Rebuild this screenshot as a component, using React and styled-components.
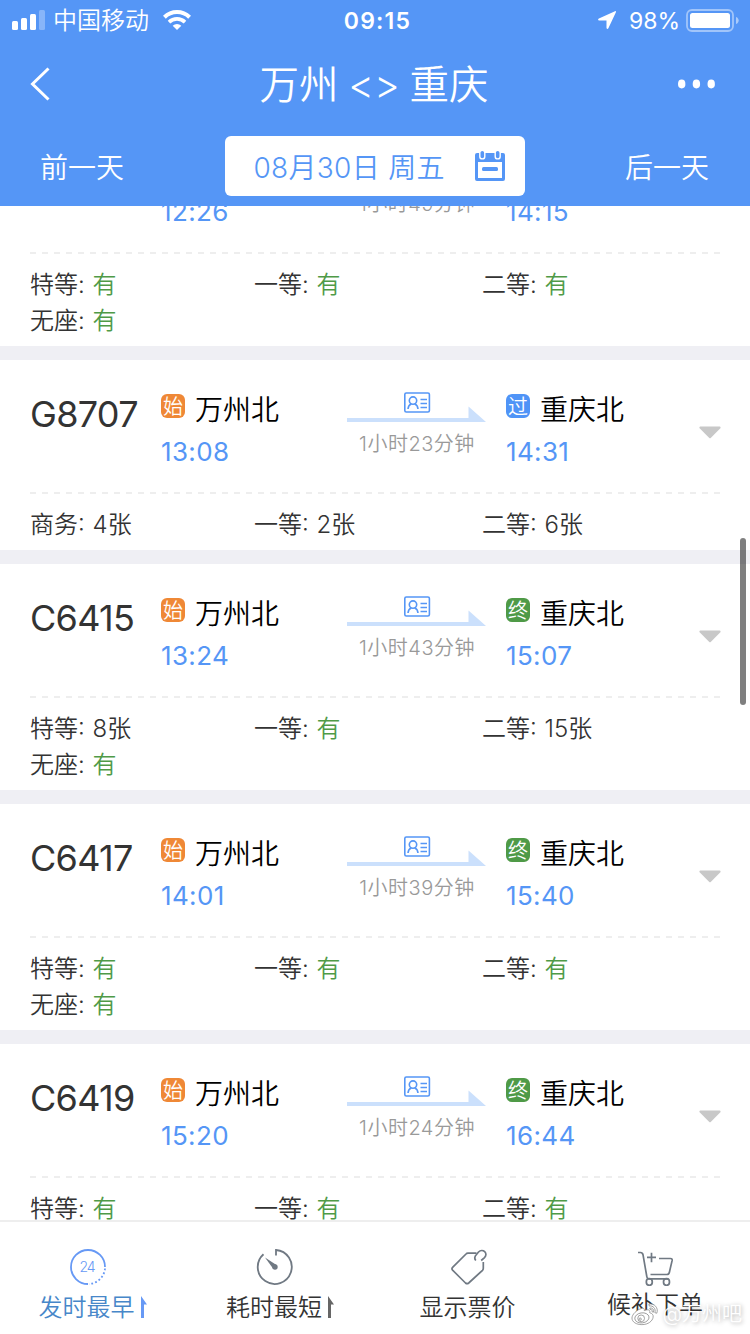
import React from "react";
import styled, { createGlobalStyle } from "styled-components";

const GlobalStyle = createGlobalStyle`
  * {
    box-sizing: border-box;
  }

  body {
    margin: 0;
    background: #fff;
    font-family: Inter, "Noto Sans CJK SC", sans-serif;
    font-weight: 350;
  }
`;

const Screen = styled.div`
  position: relative;
  display: flex;
  flex-direction: column;
  width: 750px;
  height: 1334px;
  overflow: hidden;
`;

const Header = styled.header`
  flex: none;
  height: 206px;
  color: #fff;
  background: #5596f6;
`;

const StatusBar = styled.div`
  display: grid;
  grid-template-columns: 1fr auto 1fr;
  align-items: center;
  height: 40px;
  padding: 0 11px 0 12px;
`;

const StatusLeft = styled.div`
  display: flex;
  align-items: center;
`;

const Carrier = styled.span`
  margin: 0 14px 0 8px;
  padding-top: 2px;
  font-size: 24px;
  line-height: 38px;
`;

const Clock = styled.span`
  padding: 1px 0 0 4px;
  font-size: 23px;
  font-weight: 600;
  letter-spacing: 1.2px;
`;

const StatusRight = styled.div`
  display: flex;
  align-items: center;
  justify-content: flex-end;
`;

const Percent = styled.span`
  margin: 2px 6px 0 13px;
  font-size: 23px;
  font-weight: 400;
`;

const TitleBar = styled.div`
  display: grid;
  grid-template-columns: 1fr auto 1fr;
  align-items: center;
  height: 88px;
  padding: 0 34px 0 29px;
`;

const BackButton = styled.span`
  display: flex;
`;

const MoreButton = styled.span`
  display: flex;
  justify-content: flex-end;
`;

const Title = styled.h1`
  margin: 0;
  padding: 2px 0 0 3px;
  font-size: 39.5px;
  font-weight: 350;
  line-height: 86px;
  word-spacing: -1.5px;
`;

const DateBar = styled.div`
  display: flex;
  align-items: center;
  justify-content: space-between;
  height: 76px;
  padding: 0 41px 0 40px;
`;

const DayLink = styled.span`
  padding-top: 3px;
  font-size: 28px;
  line-height: 60px;
`;

const DateBox = styled.div`
  display: flex;
  align-items: center;
  justify-content: space-between;
  width: 300px;
  height: 60px;
  padding: 0 19px 0 29px;
  border-radius: 6px;
  color: #5596f6;
  background: #fff;
  font-size: 28px;
  letter-spacing: 0.3px;
`;

const TrainList = styled.main`
  flex: 1;
  min-height: 0;
  overflow: hidden;
  background: #efeff4;
`;

const Scrolled = styled.div`
  display: flex;
  flex-direction: column;
  gap: 14px;
  margin-top: -86px;
`;

const Card = styled.section`
  background: #fff;
`;

const Trip = styled.div`
  display: grid;
  grid-template-columns: 131px 186px 140px 19px 193px 1fr;
  height: 132px;
  padding: 28px 29px 0 30px;
`;

const TrainCode = styled.span`
  font-size: 36px;
  font-weight: 400;
  line-height: 52px;
  letter-spacing: -0.7px;
  color: #333;
`;

const StationRow = styled.div`
  display: flex;
  align-items: center;
  height: 40px;
  font-size: 28px;
  color: #000;
`;

const StationName = styled.span`
  padding-top: 3px;
  line-height: 40px;
`;

const Badge = styled.span`
  width: 24px;
  height: 24px;
  margin: -4px 10px 0 0;
  border-radius: 6px;
  background: ${({ $color }) => $color};
  color: #fff;
  font-size: 20px;
  line-height: 27px;
  text-align: center;
`;

const Time = styled.div`
  height: 48px;
  font-size: 26px;
  font-weight: 400;
  line-height: 48px;
  letter-spacing: 0.35px;
  color: #5596f6;
`;

const Route = styled.div`
  padding-top: 4px;
`;

const RouteLine = styled.div`
  height: 31px;
`;

const Duration = styled.div`
  margin-top: 6px;
  font-size: 20px;
  line-height: 30px;
  letter-spacing: 0.5px;
  color: #999;
  text-align: center;
`;

const CaretCell = styled.div`
  display: flex;
  justify-content: flex-end;
  padding-top: 38px;
`;

const Dashes = styled.div`
  height: 2px;
  margin: 0 30px;
  background: repeating-linear-gradient(90deg, #eee 0 6px, #fff 6px 12px);
`;

const Seats = styled.div`
  display: grid;
  grid-template-columns: 224px 228px 1fr;
  padding: 13px 30px 7px;
  font-size: 24px;
  line-height: 36px;
  color: #333;
`;

const Seat = styled.span`
  height: 36px;
  word-spacing: 1px;
`;

const Available = styled.span`
  color: #4f9a47;
`;

const ScrollThumb = styled.div`
  position: absolute;
  top: 538px;
  right: 4px;
  width: 6px;
  height: 167px;
  border-radius: 3px;
  background: rgba(0, 0, 0, 0.5);
`;

const TabBar = styled.footer`
  display: grid;
  grid-template-columns: 187px 188px 187px 188px;
  flex: none;
  height: 114px;
  border-top: 2px solid #eee;
  background: #fff;
`;

const Tab = styled.div`
  display: flex;
  flex-direction: column;
  align-items: center;
  padding-top: 26px;
  color: ${({ $active }) => ($active ? "#4787c9" : "#333")};
`;

const TabIcon = styled.span`
  display: flex;
  height: 38px;
  padding-right: ${({ $flagged }) => ($flagged ? "12px" : "0")};
`;

const TabLabel = styled.div`
  display: flex;
  align-items: center;
  gap: 6px;
  margin: ${({ $raised }) => ($raised ? "-1px" : "2px")} 2px 0 0;
  font-size: 24px;
  line-height: 40px;

  svg {
    margin-bottom: 3px;
  }
`;

const Watermark = styled.div`
  position: absolute;
  right: 8px;
  bottom: 4px;
  display: flex;
  align-items: center;
  gap: 4px;
  color: #fff;
  font-size: 20px;
  line-height: 32px;
  text-shadow: 1px 1px 4px rgba(0, 0, 0, 0.35);
`;

const SignalIcon = () => (
  <svg width="33" height="20" viewBox="0 0 33 20" fill="#fff">
    <rect x="0" y="11" width="6" height="9" rx="1.5" />
    <rect x="9" y="8" width="6" height="12" rx="1.5" />
    <rect x="18" y="4" width="6" height="16" rx="1.5" />
    <rect x="27" y="0" width="6" height="20" rx="1.5" opacity="0.3" />
  </svg>
);

const WifiIcon = () => (
  <svg width="28" height="20" viewBox="0 0 28 20" fill="none" stroke="#fff" strokeWidth="4">
    <path d="M1.4 7.2a18 18 0 0 1 25.2 0" />
    <path d="M6 12.1a11.5 11.5 0 0 1 16 0" strokeWidth="3.6" />
    <path d="M14 20l-4.3-4.3a6.2 6.2 0 0 1 8.600 0z" fill="#fff" stroke="none" />
  </svg>
);

const LocationIcon = () => (
  <svg width="18" height="18" viewBox="0 0 18 18" fill="#fff">
    <path d="M17 .2.9 7.600c-1.200.6-1 1.900.3 1.900h7.300v7.300c0 1.400 1.400 1.600 2 .3L17.900 1.200c.3-.8-.1-1.300-.9-1z" />
  </svg>
);

const BatteryIcon = () => (
  <svg width="53" height="23" viewBox="0 0 53 23">
    <rect x="1" y="1" width="46" height="21" rx="5" fill="none" stroke="#fff" strokeWidth="1.8" opacity="0.45" />
    <rect x="4" y="4" width="40" height="15" rx="2.5" fill="#fff" />
    <path d="M50 8c3.6 1.2 3.6 6 0 7z" fill="#fff" opacity="0.5" />
  </svg>
);

const BackIcon = () => (
  <svg width="22" height="36" viewBox="0 0 22 36" fill="none" stroke="#fff" strokeWidth="3">
    <path d="M19.5 2.5 3.5 18l16 15.5" />
  </svg>
);

const MoreIcon = () => (
  <svg width="38" height="10" viewBox="0 0 38 10" fill="#fff">
    <ellipse cx="3.700" cy="5" rx="3.700" ry="4.400" />
    <ellipse cx="18.400" cy="5" rx="3.700" ry="4.400" />
    <ellipse cx="33.200" cy="5" rx="3.700" ry="4.400" />
  </svg>
);

const CalendarIcon = () => (
  <svg width="32" height="32" viewBox="0 0 32 32">
    <path
      fill="#5596f6"
      fillRule="evenodd"
      d="M3 3h26q2 0 2 2v24q0 2-2 2H3q-2 0-2-2V5q0-2 2-2zM4 12v16h24V12z"
    />
    <g fill="#5596f6" stroke="#fff" strokeWidth="1.4">
      <rect x="5.8" y=".3" width="5" height="8.6" rx="2.5" />
      <rect x="21.2" y=".3" width="5" height="8.6" rx="2.5" />
    </g>
    <rect x="8" y="17" width="16" height="4" rx="1.5" fill="#5596f6" />
  </svg>
);

const RouteArrow = () => (
  <svg width="140" height="31" viewBox="0 0 140 31">
    <path d="M0 26h121.500V14.500L139 30H0z" fill="#cbe0fc" />
    <g fill="none" stroke="#5596f6" strokeWidth="1.6">
      <rect x="57.800" y="1" width="24.600" height="19" rx="1.500" />
      <circle cx="66" cy="8.600" r="3.700" />
      <path d="M61 17c.2-2.800 1.300-4.300 3.300-5M71 17c-.2-2.800-1.300-4.300-3.300-5" />
      <path d="M73.500 7.500h6.500M73.500 11.500h6.500M73.500 15.500h6.500" />
    </g>
  </svg>
);

const Caret = () => (
  <svg width="22" height="13" viewBox="0 0 22 13" fill="#c8c8c8">
    <path d="M1.200.5h19.600q1 0 .8 1.500L11.700 12q-.7.6-1.400 0L.4 2Q.2.500 1.200.5z" />
  </svg>
);

const EarliestIcon = () => (
  <svg width="38" height="38" viewBox="0 0 38 38" fill="none" stroke="#6799f5" strokeWidth="1.800">
    <path d="M19 36A17 17 0 1 1 36 19" />
    <path d="M36 20.500A17 17 0 0 1 20 36" strokeDasharray="1.800 2.200" />
    <text x="18.500" y="24.300" fontSize="14" textLength="16" textAnchor="middle" fill="#6799f5" stroke="none">
      24
    </text>
  </svg>
);

const StopwatchIcon = () => (
  <svg width="38" height="38" viewBox="0 0 38 38" fill="none" stroke="#707983" strokeWidth="1.800">
    <path d="M20 7.500V2a17 17 0 1 1-12.500 4.200" />
    <circle cx="19" cy="19" r="2.700" fill="#707983" stroke="none" />
    <path d="M9 9.500 20.500 17 17 20.500z" fill="#707983" stroke="none" />
  </svg>
);

const TagIcon = () => (
  <svg width="38" height="38" viewBox="0 0 38 38" fill="none" stroke="#707983" strokeWidth="1.700">
    <path d="M26.500 5.200H18q-1.300 0-2 .8L2.600 19.400q-1.300 1.400 0 2.800L15.500 35q1.600 1.400 3.200 0L32.500 22.300q.8-.8.8-2V14" />
    <path d="M25.800 12.500c-1.700-2-1-4.200.7-6l2-2.500c1.900-2 4.600-1.900 6.200-.4 1.700 1.600 1.600 4.200-.2 6l-3.300 2.900" />
  </svg>
);

const CartIcon = () => (
  <svg width="38" height="38" viewBox="0 0 38 38" fill="none" stroke="#707983" strokeWidth="1.700">
    <path d="M1 4.500h2.500q2 0 2.500 2.200L9.800 28.500q.3 2.300 2.200 2.300h19.500" />
    <path d="M22 10.500h11.500q2 0 1.600 2.200l-2.700 11.500q-.5 2.300-2.600 2.300H13.500" />
    <path d="M10 9.300h9M14.500 4.800v9.500" />
    <ellipse cx="12.300" cy="34" rx="3" ry="3.300" />
    <ellipse cx="29.500" cy="34" rx="3" ry="3.300" />
  </svg>
);

const SortFlag = ({ color }) => (
  <svg width="6" height="22" viewBox="0 0 6 22" fill={color}>
    <path d="M0 0 6 8.500H3V22H0z" />
  </svg>
);

const WeiboIcon = () => (
  <svg width="28" height="25" viewBox="0 0 29 25" fill="#fff" stroke="#888" strokeWidth=".8">
    <path d="M11 6.200c1.700-.6 3.300 0 2.700 2.300 4-1.600 6.600-.9 5.600 2.100 2.700.8 4 2.200 3.600 4.700-.5 4-5.200 7.700-11.600 7.700C5.400 23 1 20.200 1 16.200c0-3.700 5-8.700 10-10z" />
    <ellipse cx="11.300" cy="16" rx="7.400" ry="5.200" transform="rotate(-8 11.300 16)" />
    <circle cx="10.500" cy="16.500" r="3.500" />
    <circle cx="9.500" cy="17.300" r="1.200" />
    <path d="M18.500 1.700c5.500-1.300 10.400 4.100 8.200 9.500l-2-.6c1.400-4-2-7.800-5.700-6.800zM19.500 5.800c2.800-.5 4.600 1.700 3.800 4.300l-1.500-.4c.5-1.600-.5-2.700-2-2.400z" />
  </svg>
);

const badgeColors = {
  始: "#ef8836",
  过: "#4f94f7",
  终: "#4f9a47",
};

const trains = [
  {
    code: "G8705",
    depart: "12:26",
    arrive: "14:15",
    badge: "终",
    duration: "1小时49分钟",
    seats: [["特等", "有"], ["一等", "有"], ["二等", "有"], ["无座", "有"]],
  },
  {
    code: "G8707",
    depart: "13:08",
    arrive: "14:31",
    badge: "过",
    duration: "1小时23分钟",
    seats: [["商务", "4张"], ["一等", "2张"], ["二等", "6张"]],
  },
  {
    code: "C6415",
    depart: "13:24",
    arrive: "15:07",
    badge: "终",
    duration: "1小时43分钟",
    seats: [["特等", "8张"], ["一等", "有"], ["二等", "15张"], ["无座", "有"]],
  },
  {
    code: "C6417",
    depart: "14:01",
    arrive: "15:40",
    badge: "终",
    duration: "1小时39分钟",
    seats: [["特等", "有"], ["一等", "有"], ["二等", "有"], ["无座", "有"]],
  },
  {
    code: "C6419",
    depart: "15:20",
    arrive: "16:44",
    badge: "终",
    duration: "1小时24分钟",
    seats: [["特等", "有"], ["一等", "有"], ["二等", "有"], ["无座", "有"]],
  },
];

const Stop = ({ badge, name, time }) => (
  <div>
    <StationRow>
      <Badge $color={badgeColors[badge]}>{badge}</Badge>
      <StationName>{name}</StationName>
    </StationRow>
    <Time>{time}</Time>
  </div>
);

const TrainCard = ({ train }) => (
  <Card>
    <Trip>
      <TrainCode>{train.code}</TrainCode>
      <Stop badge="始" name="万州北" time={train.depart} />
      <Route>
        <RouteLine>
          <RouteArrow />
        </RouteLine>
        <Duration>{train.duration}</Duration>
      </Route>
      <span />
      <Stop badge={train.badge} name="重庆北" time={train.arrive} />
      <CaretCell>
        <Caret />
      </CaretCell>
    </Trip>
    <Dashes />
    <Seats>
      {train.seats.map(([kind, left]) => (
        <Seat key={kind}>
          {kind}: {left === "有" ? <Available>{left}</Available> : left}
        </Seat>
      ))}
    </Seats>
  </Card>
);

const App = () => {
  return (
    <>
      <GlobalStyle />
      <Screen>
        <Header>
          <StatusBar>
            <StatusLeft>
              <SignalIcon />
              <Carrier>中国移动</Carrier>
              <WifiIcon />
            </StatusLeft>
            <Clock>09:15</Clock>
            <StatusRight>
              <LocationIcon />
              <Percent>98%</Percent>
              <BatteryIcon />
            </StatusRight>
          </StatusBar>
          <TitleBar>
            <BackButton>
              <BackIcon />
            </BackButton>
            <Title>万州 &lt;&gt; 重庆</Title>
            <MoreButton>
              <MoreIcon />
            </MoreButton>
          </TitleBar>
          <DateBar>
            <DayLink>前一天</DayLink>
            <DateBox>
              <span>08月30日 周五</span>
              <CalendarIcon />
            </DateBox>
            <DayLink>后一天</DayLink>
          </DateBar>
        </Header>
        <TrainList>
          <Scrolled>
            {trains.map((train) => (
              <TrainCard key={train.code} train={train} />
            ))}
          </Scrolled>
        </TrainList>
        <TabBar>
          <Tab $active>
            <TabIcon $flagged>
              <EarliestIcon />
            </TabIcon>
            <TabLabel>
              发时最早
              <SortFlag color="#6799f5" />
            </TabLabel>
          </Tab>
          <Tab>
            <TabIcon $flagged>
              <StopwatchIcon />
            </TabIcon>
            <TabLabel>
              耗时最短
              <SortFlag color="#666" />
            </TabLabel>
          </Tab>
          <Tab>
            <TabIcon>
              <TagIcon />
            </TabIcon>
            <TabLabel>显示票价</TabLabel>
          </Tab>
          <Tab>
            <TabIcon>
              <CartIcon />
            </TabIcon>
            <TabLabel $raised>候补下单</TabLabel>
          </Tab>
        </TabBar>
        <ScrollThumb />
        <Watermark>
          <WeiboIcon />
          @万州吧
        </Watermark>
      </Screen>
    </>
  );
};

export default App;
